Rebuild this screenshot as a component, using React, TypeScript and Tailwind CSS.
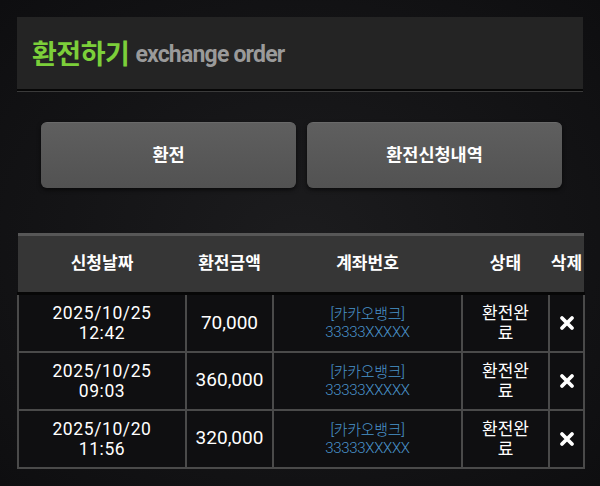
import React from 'react';

interface ExchangeRow {
    date: string;
    time: string;
    amount: string;
    bank: string;
    account: string;
    status: string;
}

const rows: ExchangeRow[] = [
    { date: '2025/10/25', time: '12:42', amount: '70,000', bank: '[카카오뱅크]', account: '33333XXXXX', status: '환전완료' },
    { date: '2025/10/25', time: '09:03', amount: '360,000', bank: '[카카오뱅크]', account: '33333XXXXX', status: '환전완료' },
    { date: '2025/10/20', time: '11:56', amount: '320,000', bank: '[카카오뱅크]', account: '33333XXXXX', status: '환전완료' },
];

const font = { fontFamily: 'Roboto, "Noto Sans CJK KR", sans-serif' };

const DeleteIcon = () => (
    <svg width="16" height="16" viewBox="0 0 16 16" className="mx-auto">
        <path d="M3 3 L13 13 M13 3 L3 13" stroke="#ffffff" strokeWidth={3.8} strokeLinecap="round" />
    </svg>
);

export default function App() {
    return (
        <div
            className="w-[600px] h-[486px] overflow-hidden bg-[radial-gradient(ellipse_at_center,#1c1c1e_0%,#141416_55%,#0e0e10_100%)] pt-[17px]"
            style={font}
        >
            {/* title panel */}
            <div className="mx-[17px] h-[72px] bg-[#242424] flex items-center pl-[15px] pt-[5px]">
                <span className="text-[27px] font-bold text-[#7ccf3a] tracking-[-0.5px]">환전하기</span>
                <span className="ml-[6px] text-[23px] font-bold text-[#9a9a9a] tracking-[-0.8px]">exchange order</span>
            </div>
            <div className="mx-[17px] h-[2px] bg-[#070707]" />
            <div className="mx-[17px] h-[1px] bg-[#3a3a3a]" />

            {/* buttons */}
            <div className="mt-[30px] ml-[41px] w-[521px] flex gap-[11px]">
                <button className="flex-1 h-[66px] rounded-[6px] bg-gradient-to-b from-[#5f5f5f] to-[#525252] border-t border-[#6a6a6a] shadow-[0_2px_4px_rgba(0,0,0,0.6)] text-white text-[17.5px] font-bold">
                    환전
                </button>
                <button className="flex-1 h-[66px] rounded-[6px] bg-gradient-to-b from-[#5f5f5f] to-[#525252] border-t border-[#6a6a6a] shadow-[0_2px_4px_rgba(0,0,0,0.6)] text-white text-[17.5px] font-bold">
                    환전신청내역
                </button>
            </div>

            {/* history table */}
            <div className="mt-[45px] mx-[17px]">
                <table className="w-[566px] table-fixed border-collapse">
                    <colgroup>
                        <col className="w-[168px]" />
                        <col className="w-[87px]" />
                        <col className="w-[189px]" />
                        <col className="w-[87px]" />
                        <col className="w-[35px]" />
                    </colgroup>
                    <thead>
                        <tr className="h-[59px] bg-[#363636] border-t-[3px] border-t-[#575757] border-b-[3px] border-b-[#070707] text-white text-[17px] font-bold">
                            <th className="font-bold">신청날짜</th>
                            <th className="font-bold">환전금액</th>
                            <th className="font-bold">계좌번호</th>
                            <th className="font-bold">상태</th>
                            <th className="font-bold whitespace-nowrap">삭제</th>
                        </tr>
                    </thead>
                    <tbody className="bg-[#0f0f11]">
                        {rows.map((row, i) => (
                            <tr key={i} className="h-[58px]">
                                <td className="border-2 border-[#4a4a4a] text-center text-white text-[17.5px] leading-[20px] tracking-[0.6px]">
                                    <div>{row.date}</div>
                                    <div>{row.time}</div>
                                </td>
                                <td className="border-2 border-[#4a4a4a] text-center text-white text-[19px]">
                                    {row.amount}
                                </td>
                                <td className="border-2 border-[#4a4a4a] text-center text-[#4a94cc] text-[15px] leading-[18px] tracking-[-0.3px] font-light">
                                    <div>{row.bank}</div>
                                    <div>{row.account}</div>
                                </td>
                                <td className="border-2 border-[#4a4a4a] text-center text-white text-[17px] leading-[20px]">
                                    <span className="inline-block w-[54px] break-all">{row.status}</span>
                                </td>
                                <td className="border-2 border-[#4a4a4a] text-center">
                                    <DeleteIcon />
                                </td>
                            </tr>
                        ))}
                    </tbody>
                </table>
            </div>
        </div>
    );
}
